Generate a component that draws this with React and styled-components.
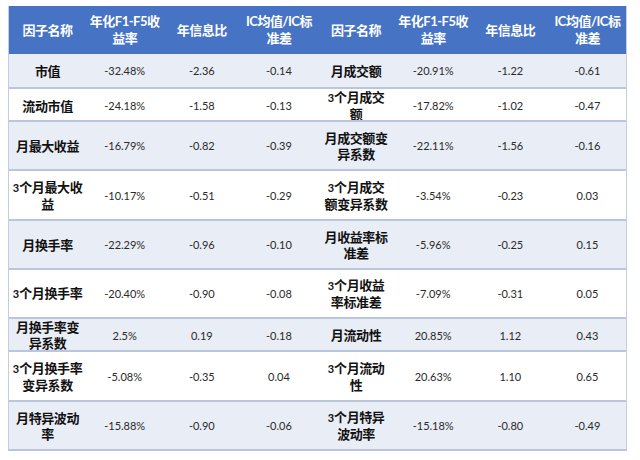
import React from "react";
import styled, { createGlobalStyle } from "styled-components";

const Global = createGlobalStyle`
  html, body { margin: 0; padding: 0; background: #ffffff; }
  body { font-family: "Lato", "Noto Sans CJK SC", sans-serif; }
`;

const Page = styled.div`
  width: 640px;
  height: 460px;
  padding: 6px 13px 0 8px;
  box-sizing: border-box;
`;

const Table = styled.div`
  width: 619px;
  display: flex;
  flex-direction: column;
  border-left: 1px solid #c3cde0;
  border-right: 1px solid #c3cde0;
  border-bottom: 2px solid #b9c5dc;
  box-sizing: border-box;
`;

const Row = styled.div`
  display: grid;
  grid-template-columns: repeat(8, 1fr);
  height: ${(p) => p.$h}px;
  box-sizing: border-box;
  background: ${(p) => (p.$head ? "#4673c4" : p.$alt ? "#e9edf5" : "#ffffff")};
  border-top: ${(p) => (p.$noTop ? "none" : "2px solid #bac6dc")};
`;

const HeadCell = styled.div`
  display: flex;
  align-items: center;
  justify-content: center;
  text-align: center;
  color: #ffffff;
  font-family: "Lato", "Noto Sans CJK SC", sans-serif;
  font-weight: 700;
  font-size: 13px;
  line-height: 17px;
  letter-spacing: -0.5px;
`;

const NameCell = styled.div`
  display: flex;
  align-items: center;
  justify-content: center;
  text-align: center;
  color: #111111;
  font-family: "Lato", "Noto Sans CJK SC", sans-serif;
  font-weight: 700;
  font-size: 13px;
  line-height: 16px;
  letter-spacing: -0.4px;
`;

const Small = styled.span`
  font-size: 11px;
  letter-spacing: 0;
`;

const NumCell = styled.div`
  display: flex;
  align-items: center;
  justify-content: center;
  color: #2a2a2a;
  font-family: "Lato", sans-serif;
  font-size: 11px;
`;

const Lines = ({ lines, small }) =>
  lines.map((l, i) => (
    <React.Fragment key={i}>
      {i > 0 && <br />}
      {small && l.startsWith("3") ? (
        <>
          <Small>3</Small>
          {l.slice(1)}
        </>
      ) : (
        l
      )}
    </React.Fragment>
  ));

const headers = [
  ["因子名称"],
  ["年化F1-F5收", "益率"],
  ["年信息比"],
  ["IC均值/IC标", "准差"],
];

const rows = [
  { h: 33, a: [["市值"], "-32.48%", "-2.36", "-0.14"], b: [["月成交额"], "-20.91%", "-1.22", "-0.61"] },
  { h: 33, a: [["流动市值"], "-24.18%", "-1.58", "-0.13"], b: [["3个月成交", "额"], "-17.82%", "-1.02", "-0.47"] },
  { h: 49, a: [["月最大收益"], "-16.79%", "-0.82", "-0.39"], b: [["月成交额变", "异系数"], "-22.11%", "-1.56", "-0.16"] },
  { h: 50, a: [["3个月最大收", "益"], "-10.17%", "-0.51", "-0.29"], b: [["3个月成交", "额变异系数"], "-3.54%", "-0.23", "0.03"] },
  { h: 49, a: [["月换手率"], "-22.29%", "-0.96", "-0.10"], b: [["月收益率标", "准差"], "-5.96%", "-0.25", "0.15"] },
  { h: 49, a: [["3个月换手率"], "-20.40%", "-0.90", "-0.08"], b: [["3个月收益", "率标准差"], "-7.09%", "-0.31", "0.05"] },
  { h: 33, a: [["月换手率变", "异系数"], "2.5%", "0.19", "-0.18"], b: [["月流动性"], "20.85%", "1.12", "0.43"] },
  { h: 50, a: [["3个月换手率", "变异系数"], "-5.08%", "-0.35", "0.04"], b: [["3个月流动", "性"], "20.63%", "1.10", "0.65"] },
  { h: 49, a: [["月特异波动", "率"], "-15.88%", "-0.90", "-0.06"], b: [["3个月特异", "波动率"], "-15.18%", "-0.80", "-0.49"] },
];

export default function App() {
  return (
    <>
      <Global />
      <Page>
        <Table>
          <Row $head $noTop $h={48}>
            {[...headers, ...headers].map((h, i) => (
              <HeadCell key={i}>
                <div>
                  <Lines lines={h} />
                </div>
              </HeadCell>
            ))}
          </Row>
          {rows.map((r, i) => (
            <Row key={i} $h={r.h} $alt={i % 2 === 0} $noTop={i === 0}>
              {[r.a, r.b].map((g, k) => (
                <React.Fragment key={k}>
                  <NameCell>
                    <div>
                      <Lines lines={g[0]} small />
                    </div>
                  </NameCell>
                  <NumCell>{g[1]}</NumCell>
                  <NumCell>{g[2]}</NumCell>
                  <NumCell>{g[3]}</NumCell>
                </React.Fragment>
              ))}
            </Row>
          ))}
        </Table>
      </Page>
    </>
  );
}
